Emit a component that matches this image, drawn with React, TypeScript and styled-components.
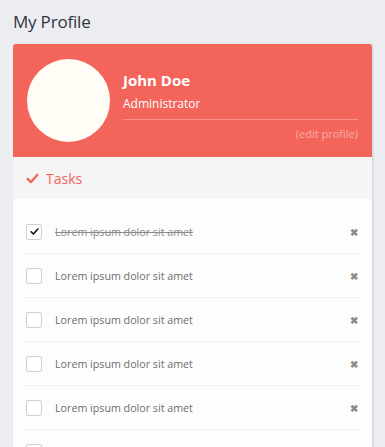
import React, { useState } from 'react';
import styled, { createGlobalStyle } from 'styled-components';

const GlobalStyle = createGlobalStyle`
  html, body {
    margin: 0;
    padding: 0;
    background: #ecedf1;
    font-family: 'Open Sans', 'Liberation Sans', sans-serif;
  }
`;

const ACCENT = '#f3645a';

const Page = styled.div`
  padding: 10px 13px 0;
  height: 447px;
  overflow: hidden;
  box-sizing: border-box;
`;

const PageTitle = styled.h1`
  margin: 0 0 11px;
  font-size: 17px;
  font-weight: 400;
  color: #2f3540;
  line-height: 23px;
  letter-spacing: -0.2px;
`;

const Card = styled.div`
  width: 359px;
  border-radius: 3px;
  overflow: hidden;
  background: #fdfdfd;
  box-shadow: 1px 0 2px rgba(0, 0, 0, 0.12);
`;

const ProfileHeader = styled.div`
  background: ${ACCENT};
  display: flex;
  align-items: center;
  padding: 15px 14px;
  gap: 13px;
`;

const Avatar = styled.div`
  width: 83px;
  height: 83px;
  border-radius: 50%;
  background: #fffdf6;
  flex-shrink: 0;
`;

const ProfileInfo = styled.div`
  flex: 1;
  display: flex;
  flex-direction: column;
  padding-top: 10px;
`;

const Name = styled.div`
  font-size: 15px;
  font-weight: 700;
  color: #fff;
  line-height: 20px;
`;

const Role = styled.div`
  font-size: 12px;
  color: #fff;
  margin-top: 5px;
  line-height: 17px;
  padding-bottom: 7px;
  border-bottom: 1px solid rgba(255, 255, 255, 0.3);
`;

const EditLink = styled.a`
  align-self: flex-end;
  font-size: 11px;
  color: #f9b0aa;
  margin-top: 6px;
  line-height: 15px;
  text-decoration: none;
`;

const SectionHeader = styled.div`
  background: #f5f5f6;
  height: 42px;
  display: flex;
  align-items: center;
  padding: 0 13px;
  gap: 7px;
  color: ${ACCENT};
  font-size: 14px;
`;

const TaskList = styled.ul`
  list-style: none;
  margin: 0;
  padding: 11px 11px 0;
`;

const TaskRow = styled.li`
  height: 43px;
  display: flex;
  align-items: center;
  border-bottom: 1px solid #eeeff1;
  padding: 0 2px;
`;

const Box = styled.span<{ $checked: boolean }>`
  width: 14px;
  height: 14px;
  border: 1px solid #cfd0d3;
  border-radius: 2px;
  background: #fff;
  display: inline-flex;
  align-items: center;
  justify-content: center;
  flex-shrink: 0;
  cursor: pointer;
`;

const TaskText = styled.span<{ $done: boolean }>`
  flex: 1;
  margin-left: 13px;
  font-size: 10.7px;
  color: ${({ $done }) => ($done ? '#8a8a8a' : '#6d6d6d')};
  text-decoration: ${({ $done }) => ($done ? 'line-through' : 'none')};
`;

const Remove = styled.span`
  font-size: 10px;
  color: #8c8c8c;
  font-weight: 700;
  margin-right: 1px;
  cursor: pointer;
`;

const CheckMark = ({ size, color }: { size: number; color: string }) => (
  <svg width={size} height={size} viewBox="0 0 16 16">
    <path d="M2 8.5 L6 12.5 L14 3.5" fill="none" stroke={color} strokeWidth={2.8} strokeLinecap="round" strokeLinejoin="round" />
  </svg>
);

const App: React.FC = () => {
  const [tasks, setTasks] = useState([true, false, false, false, false, false]);

  const toggle = (i: number) => setTasks(tasks.map((t, j) => (j === i ? !t : t)));

  return (
    <>
      <GlobalStyle />
      <Page>
        <PageTitle>My Profile</PageTitle>
        <Card>
          <ProfileHeader>
            <Avatar />
            <ProfileInfo>
              <Name>John Doe</Name>
              <Role>Administrator</Role>
              <EditLink href="#">(edit profile)</EditLink>
            </ProfileInfo>
          </ProfileHeader>
          <SectionHeader>
            <CheckMark size={13} color={ACCENT} />
            Tasks
          </SectionHeader>
          <TaskList>
            {tasks.map((done, i) => (
              <TaskRow key={i}>
                <Box $checked={done} onClick={() => toggle(i)}>
                  {done && <CheckMark size={9} color="#111" />}
                </Box>
                <TaskText $done={done}>Lorem ipsum dolor sit amet</TaskText>
                <Remove>✖</Remove>
              </TaskRow>
            ))}
          </TaskList>
        </Card>
      </Page>
    </>
  );
};

export default App;
